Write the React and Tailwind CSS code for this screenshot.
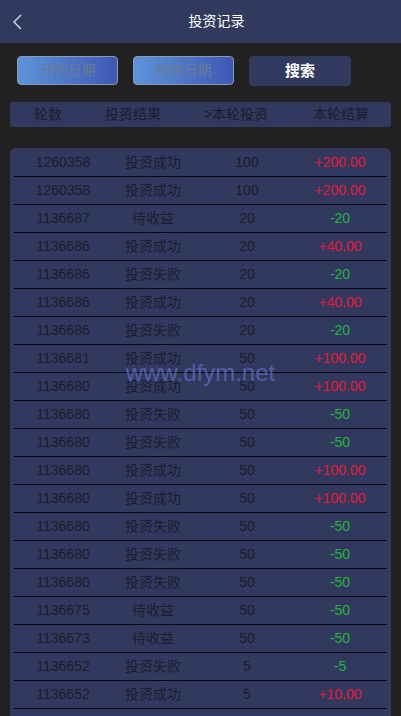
import React from "react";

const rows = [
  ["1260358", "投资成功", "100", "+200.00"],
  ["1260358", "投资成功", "100", "+200.00"],
  ["1136687", "待收益", "20", "-20"],
  ["1136686", "投资成功", "20", "+40.00"],
  ["1136686", "投资失败", "20", "-20"],
  ["1136686", "投资成功", "20", "+40.00"],
  ["1136686", "投资失败", "20", "-20"],
  ["1136681", "投资成功", "50", "+100.00"],
  ["1136680", "投资成功", "50", "+100.00"],
  ["1136680", "投资失败", "50", "-50"],
  ["1136680", "投资失败", "50", "-50"],
  ["1136680", "投资成功", "50", "+100.00"],
  ["1136680", "投资成功", "50", "+100.00"],
  ["1136680", "投资失败", "50", "-50"],
  ["1136680", "投资失败", "50", "-50"],
  ["1136680", "投资失败", "50", "-50"],
  ["1136675", "待收益", "50", "-50"],
  ["1136673", "待收益", "50", "-50"],
  ["1136652", "投资失败", "5", "-5"],
  ["1136652", "投资成功", "5", "+10.00"],
];

export default function App() {
  return (
    <div
      className="relative min-h-[716px] bg-[#212121] text-[14px]"
      style={{ fontFamily: '"Liberation Sans", "Noto Sans CJK SC", sans-serif' }}
    >
      <div className="flex h-[43px] items-center bg-[#313a5e]">
        <div className="flex w-[32px] justify-center pl-[2px]">
          <svg width="11" height="16" viewBox="0 0 11 16" fill="none">
            <path d="M9 1 L2 8 L9 15" stroke="#d8dbe6" strokeWidth="1.4" />
          </svg>
        </div>
        <div className="flex-1 text-center text-[14px] text-white">投资记录</div>
      </div>

      <div className="mt-[13px] flex gap-[15px] px-[17px]">
        <div className="flex h-[29px] w-[101px] items-center justify-center rounded-[4px] border border-[#8c9ab6] bg-gradient-to-r from-[#5d94d9] to-[#3f58b4] text-[#6c7a96]">
          开始日期
        </div>
        <div className="flex h-[29px] w-[101px] items-center justify-center rounded-[4px] border border-[#8c9ab6] bg-gradient-to-r from-[#5d94d9] to-[#3f58b4] text-[#6c7a96]">
          结束日期
        </div>
        <div className="flex h-[30px] w-[102px] items-center justify-center rounded-[4px] bg-[#313a5e] text-[15px] font-bold text-white">
          搜索
        </div>
      </div>

      <div className="mx-[10px] mt-[16px] grid h-[25px] grid-cols-[76px_94px_112px_98px] items-center rounded-[3px] bg-[#313a5e] text-[#1b1c2c]">
        <div className="text-center">轮数</div>
        <div className="text-center">投资结果</div>
        <div className="text-center">&gt;本轮投资</div>
        <div className="text-center">本轮结算</div>
      </div>

      <div className="mx-[10px] mt-[21px] rounded-t-[6px] bg-[#313a5e] px-[4px] pb-[20px] pt-px">
        {rows.map((r, i) => (
          <div
            key={i}
            className="grid h-[28px] grid-cols-[98px_82px_106px_80px] items-center border-b border-[#08080c] text-[#1b1c2c]"
          >
            <div className="text-center">{r[0]}</div>
            <div className="text-center">{r[1]}</div>
            <div className="text-center">{r[2]}</div>
            <div
              className={
                "text-center " +
                (r[3].startsWith("+") ? "text-[#e8163a]" : "text-[#25b53e]")
              }
            >
              {r[3]}
            </div>
          </div>
        ))}
      </div>

      <div className="pointer-events-none absolute left-0 right-0 top-[355px] text-center text-[24px] text-[#5c64b4]/85">
        www.dfym.net
      </div>
    </div>
  );
}
